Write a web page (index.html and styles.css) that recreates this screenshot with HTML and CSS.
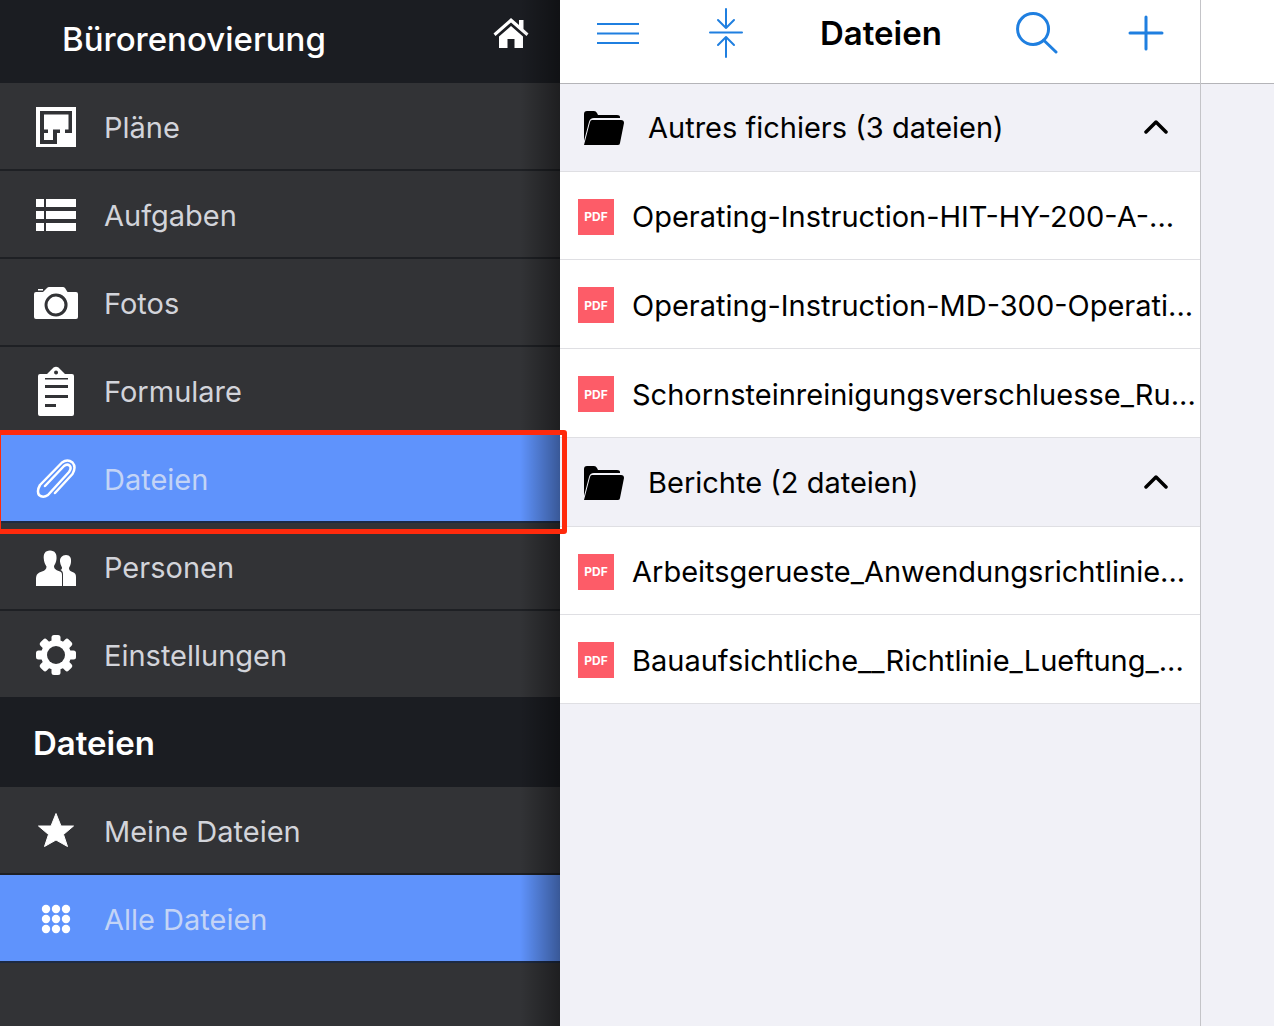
FILE: index.html
```html
<!DOCTYPE html>
<html lang="de">
<head>
    <meta charset="UTF-8">
    <meta name="viewport" content="width=device-width, initial-scale=1.0">
    <title>Dateien</title>
    <link rel="stylesheet" href="styles.css">
</head>
<body>

    <!-- Sidebar -->
    <div class="sidebar">
        <div class="project-bar">
            <span class="project-name">Bürorenovierung</span>
            <svg class="home-icon" viewBox="0 0 36 32"><path fill="#fff" d="M18 1 L26 8 V3 H30.500 V12 L35.500 16.500 L33.500 19 L18 5.500 L2.500 19 L.5 16.500 Z M6 19.500 L18 9 L30 19.500 V31 H21.500 V22 H14.500 V31 H6 Z"/></svg>
        </div>

        <div class="nav-row">
            <svg class="nav-icon" viewBox="0 0 40 40"><rect width="40" height="40" fill="#fff"/><path fill="#323336" d="M4 4 H36 V26 H29 V22.500 H32.500 V7.500 H8 V22.500 H12 V26 H8 V33 H17 V22.500 H24 V26 H21 V37 H4 Z"/></svg>
            <span class="nav-label">Pläne</span>
        </div>
        <div class="nav-row">
            <svg class="nav-icon" viewBox="0 0 40 40"><path fill="#fff" d="M0 4 H8 V12 H0 Z M10 4 H40 V12 H10 Z M0 16 H8 V24 H0 Z M10 16 H40 V24 H10 Z M0 28 H8 V36 H0 Z M10 28 H40 V36 H10 Z"/></svg>
            <span class="nav-label">Aufgaben</span>
        </div>
        <div class="nav-row">
            <svg class="nav-icon nav-icon-wide" viewBox="0 0 44 32"><path fill="#fff" fill-rule="evenodd" d="M2 5 H9 L10 4 Q10.500 3.500 11 3 L13 1 Q14 0 15 0 H29 Q30 0 31 1 L33.500 5 H42 Q44 5 44 7 V30 Q44 32 42 32 H2 Q0 32 0 30 V7 Q0 5 2 5 Z M4 2 H9 V3.500 H4 Z M22 6.500 A11.500 11.500 0 1 0 22.100 29.500 A11.500 11.500 0 1 0 22 6.500 Z M22 9.500 A8.500 8.500 0 1 1 21.900 26.500 A8.500 8.500 0 1 1 22 9.500 Z"/></svg>
            <span class="nav-label">Fotos</span>
        </div>
        <div class="nav-row">
            <svg class="nav-icon nav-icon-tall" viewBox="0 0 40 50"><path fill="#fff" fill-rule="evenodd" d="M4 8 H11 L17.500 1.500 Q20 0 22.500 1.500 L29 8 H36 Q38 8 38 10 V48 Q38 50 36 50 H4 Q2 50 2 48 V10 Q2 8 4 8 Z M20 4.500 A2 2 0 1 0 20.100 8.500 A2 2 0 1 0 20 4.500 Z M9 12 V13.500 H32 V12 Z M9 19 V22 H32 V19 Z M9 29 V32 H32 V29 Z M9 38 V41 H20 V38 Z"/></svg>
            <span class="nav-label">Formulare</span>
        </div>
        <div class="nav-row active">
            <svg class="nav-icon" viewBox="0 0 40 40"><path fill="none" stroke="#fff" stroke-width="2.500" stroke-linecap="round" stroke-linejoin="round" d="M19 34 L36.500 15 Q40.500 8 36.500 3.500 Q31.500 -.5 26 3.500 L4 26 Q.5 32 3 36 Q7 39.500 12 36 L33 13 Q36 9 33.500 6.500 Q31 4.500 28 7 L9 27"/></svg>
            <span class="nav-label">Dateien</span>
        </div>
        <div class="nav-row">
            <svg class="nav-icon" viewBox="0 -3 40 40"><path fill="#fff" d="M14 .5 C19 .5 21 4 20.500 9 C20.300 12 19 14 18 16 C18 19 20 20 24 21.500 C25.500 22 26 23 26 25 V36 H0 V29 C0 24 2 23 6 21.500 C9 20.500 10.500 19 10.500 16.500 C9 14 8 12 7.800 9 C7.300 4 9 .5 14 .5 Z M30 5 C34 5 35.500 8 35 12 C34.800 14.500 34 16 33 18 C33 20 34 21 36.500 22 C39 23 40 24 40 27 V36 H27 V25 C27 22 26.500 21 24.500 20 C25.500 19.500 26 19 26 17.500 C25 15.500 24.300 14 24 11.500 C23.700 8 26 5 30 5 Z"/></svg>
            <span class="nav-label">Personen</span>
        </div>
        <div class="nav-row last">
            <svg class="nav-icon" viewBox="0 0 40 40"><g fill="#fff"><circle cx="20" cy="20" r="15"/><rect x="15.500" y="0" width="9" height="40" rx="2.500"/><rect x="15.500" y="0" width="9" height="40" rx="2.500" transform="rotate(45 20 20)"/><rect x="15.500" y="0" width="9" height="40" rx="2.500" transform="rotate(90 20 20)"/><rect x="15.500" y="0" width="9" height="40" rx="2.500" transform="rotate(135 20 20)"/></g><circle cx="20" cy="20" r="9" fill="#323336"/></svg>
            <span class="nav-label">Einstellungen</span>
        </div>

        <div class="section-title">Dateien</div>

        <div class="nav-row">
            <svg class="nav-icon" viewBox="0 0 40 40"><path fill="#fff" stroke="#fff" stroke-linejoin="round" d="M20 2.500 L25 15 H37.500 L27.500 23.500 L31.500 35.500 L20 29 L8.500 35.500 L12.500 23.500 L2.500 15 H15 Z"/></svg>
            <span class="nav-label">Meine Dateien</span>
        </div>
        <div class="nav-row active">
            <svg class="nav-icon" viewBox="0 0 40 40"><g fill="#fff"><circle cx="10" cy="10" r="4.200"/><circle cx="20" cy="10" r="4.200"/><circle cx="30" cy="10" r="4.200"/><circle cx="10" cy="20" r="4.200"/><circle cx="20" cy="20" r="4.200"/><circle cx="30" cy="20" r="4.200"/><circle cx="10" cy="30" r="4.200"/><circle cx="20" cy="30" r="4.200"/><circle cx="30" cy="30" r="4.200"/></g></svg>
            <span class="nav-label">Alle Dateien</span>
        </div>

        <div class="edge-shadow"></div>
    </div>

    <!-- Red highlight -->
    <div class="highlight"></div>

    <!-- Files -->
    <main class="files">
        <div class="toolbar">
            <svg class="tool-icon tool-menu" viewBox="0 0 44 22"><path stroke="#1f7fe0" stroke-width="2" d="M1 2 H43 M1 11.500 H43 M1 21 H43"/></svg>
            <svg class="tool-icon tool-collapse" viewBox="0 0 34 50"><path fill="none" stroke="#1f7fe0" stroke-width="2" stroke-linecap="round" stroke-linejoin="round" d="M17 1 V20 M9 12 L17 20 L25 12 M1 24.500 H33 M17 49 V29 M9 37 L17 29 L25 37"/></svg>
            <div class="toolbar-title">Dateien</div>
            <svg class="tool-icon tool-search" viewBox="0 0 42 42"><path fill="none" stroke="#1f7fe0" stroke-width="3" stroke-linecap="round" d="M17 1.500 A15.500 15.500 0 1 0 17.100 32.500 A15.500 15.500 0 1 0 17 1.500 Z M27.500 28 L40 40"/></svg>
            <svg class="tool-icon tool-plus" viewBox="0 0 36 36"><path stroke="#1f7fe0" stroke-width="3" stroke-linecap="round" d="M18 2 V34 M2 18 H34"/></svg>
        </div>

        <div class="folder-row">
            <svg class="folder-icon" viewBox="0 0 40 34"><path d="M0 26 V3 Q0 0 3 0 H10 Q12 0 13 2 L14 4 H33 Q36 4 36 6 V7 H10 Q6 7 5 11 L0 30 Z M8 9 H37 Q40 9 40 12 L36 32 Q36 34 34 34 H0 L6 11 Q6.500 9 8 9 Z"/></svg>
            <span class="folder-name">Autres fichiers (3 dateien)</span>
            <svg class="chevron" viewBox="0 0 24 16"><path fill="none" stroke="#000" stroke-width="3.500" stroke-linecap="round" stroke-linejoin="round" d="M2 14 L12 4 L22 14"/></svg>
        </div>
        <div class="file-row">
            <span class="pdf-badge">PDF</span>
            <span class="file-name">Operating-Instruction-HIT-HY-200-A-...</span>
        </div>
        <div class="file-row">
            <span class="pdf-badge">PDF</span>
            <span class="file-name">Operating-Instruction-MD-300-Operati...</span>
        </div>
        <div class="file-row">
            <span class="pdf-badge">PDF</span>
            <span class="file-name">Schornsteinreinigungsverschluesse_Ru...</span>
        </div>

        <div class="folder-row">
            <svg class="folder-icon" viewBox="0 0 40 34"><path d="M0 26 V3 Q0 0 3 0 H10 Q12 0 13 2 L14 4 H33 Q36 4 36 6 V7 H10 Q6 7 5 11 L0 30 Z M8 9 H37 Q40 9 40 12 L36 32 Q36 34 34 34 H0 L6 11 Q6.500 9 8 9 Z"/></svg>
            <span class="folder-name">Berichte (2 dateien)</span>
            <svg class="chevron" viewBox="0 0 24 16"><path fill="none" stroke="#000" stroke-width="3.500" stroke-linecap="round" stroke-linejoin="round" d="M2 14 L12 4 L22 14"/></svg>
        </div>
        <div class="file-row">
            <span class="pdf-badge">PDF</span>
            <span class="file-name">Arbeitsgerueste_Anwendungsrichtlinie...</span>
        </div>
        <div class="file-row">
            <span class="pdf-badge">PDF</span>
            <span class="file-name">Bauaufsichtliche__Richtlinie_Lueftung_...</span>
        </div>
    </main>

    <!-- Empty pane on the right -->
    <div class="side-pane">
        <div class="side-pane-top"></div>
    </div>

</body>
</html>
```

FILE: styles.css
```css
* {
    box-sizing: border-box;
}
html, body {
    height: 100%;
}
body {
    font-family: Inter, "Liberation Sans", sans-serif;
    margin: 0;
    padding: 0;
    display: flex;
    position: relative;
    overflow: hidden;
    background-color: #f1f1f7;
}

/* Sidebar */
.sidebar {
    width: 560px;
    flex-shrink: 0;
    position: relative;
    background-color: #323336;
    color: #d2d4da;
}
.project-bar {
    height: 83px;
    background-color: #1b1d22;
    color: #fff;
    padding: 0 31px 0 62px;
    display: flex;
    align-items: center;
    justify-content: space-between;
}
.project-name {
    font-size: 33px;
    font-weight: 500;
    margin-top: -5px;
}
.home-icon {
    width: 36px;
    height: 32px;
    margin-top: -17px;
}
.nav-row {
    height: 88px;
    padding: 2px 0 0 36px;
    border-bottom: 2px solid #1e2024;
    display: flex;
    align-items: center;
}
.nav-row.last {
    height: 86px;
    border-bottom: none;
}
.nav-row.active {
    background-color: #5f93fc;
    color: #c3d4f6;
    border-bottom-color: #1c2a44;
}
.nav-icon {
    width: 40px;
    height: 40px;
    flex-shrink: 0;
}
.nav-icon-wide {
    width: 44px;
    height: 32px;
    margin-left: -2px;
    margin-right: -2px;
}
.nav-icon-tall {
    height: 50px;
}
.nav-label {
    margin-left: 28px;
    font-size: 29px;
    font-weight: 400;
}
.section-title {
    height: 90px;
    background-color: #1b1d22;
    color: #fff;
    padding: 1px 0 0 33px;
    display: flex;
    align-items: center;
    font-size: 33px;
    font-weight: 600;
}
.edge-shadow {
    position: absolute;
    top: 0;
    right: 0;
    bottom: 0;
    width: 40px;
    background: linear-gradient(to right, rgba(0, 0, 0, 0), rgba(0, 0, 0, 0.4));
    pointer-events: none;
}
.highlight {
    position: absolute;
    left: -4px;
    top: 430px;
    width: 571px;
    height: 104px;
    border: 5px solid #ff2a0c;
    border-radius: 3px;
}

/* Files */
.files {
    width: 640px;
    flex-shrink: 0;
}
.toolbar {
    height: 84px;
    background-color: #fff;
    border-bottom: 1px solid #b4b4b8;
    position: relative;
    margin-bottom: -1.1px;
    display: flex;
    align-items: center;
    padding-bottom: 18px;
}
.tool-icon {
    flex-shrink: 0;
}
.tool-menu {
    width: 44px;
    height: 22px;
    margin-left: 36px;
}
.tool-collapse {
    width: 34px;
    height: 50px;
    margin-left: 69px;
}
.toolbar-title {
    width: 121px;
    margin-left: 77px;
    font-size: 33px;
    font-weight: 600;
    color: #000;
}
.tool-search {
    width: 42px;
    height: 42px;
    margin-left: 75px;
}
.tool-plus {
    width: 36px;
    height: 36px;
    margin-left: 70px;
}
.folder-row,
.file-row {
    height: 88.75px;
    border-bottom: 1px solid #dfdfe3;
    display: flex;
    align-items: center;
    color: #000;
    white-space: nowrap;
    font-size: 29px;
}
.folder-row {
    background-color: #f1f1f7;
    padding: 2px 0 0 24px;
}
.folder-icon {
    width: 40px;
    height: 34px;
    flex-shrink: 0;
}
.folder-name {
    margin-left: 24px;
    flex: 1;
}
.chevron {
    width: 24px;
    height: 16px;
    margin: -3px 32px 0 0;
}
.file-row {
    background-color: #fff;
    padding: 2px 0 0 18px;
}
.pdf-badge {
    width: 36px;
    height: 36px;
    background-color: #fd5c68;
    color: #fff;
    font-size: 12px;
    font-weight: 700;
    display: flex;
    align-items: center;
    justify-content: center;
    flex-shrink: 0;
}
.file-name {
    margin-left: 18px;
}

/* Right pane */
.side-pane {
    flex: 1;
    border-left: 1px solid #c4c4c8;
}
.side-pane-top {
    height: 84px;
    background-color: #fff;
    border-bottom: 1px solid #b4b4b8;
}
```
